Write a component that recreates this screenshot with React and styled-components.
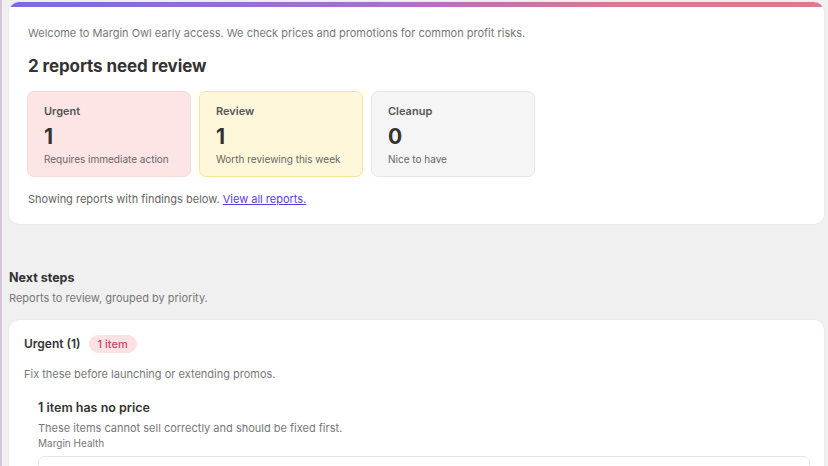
import styled, { createGlobalStyle } from "styled-components";

const GlobalStyle = createGlobalStyle`
  html, body {
    margin: 0;
    padding: 0;
    background: #f0f0f0;
  }
  body {
    font-family: Inter, "Noto Sans", "Liberation Sans", sans-serif;
    color: #333;
    -webkit-font-smoothing: antialiased;
  }
`;

const Page = styled.div`
  height: 466px;
  border-left: 2px solid #d6c4da;
  padding: 2px 4px 0 7px;
  box-sizing: border-box;
  overflow: hidden;
`;

const Card = styled.section`
  background: #fff;
  border-radius: 10px;
  box-shadow: 0 0 0 1px #ebebeb;
  overflow: hidden;
`;

const GradientBar = styled.div`
  height: 5px;
  background: linear-gradient(90deg, #7a6ae4 0%, #a770c8 45%, #d97a90 75%, #db7b8c 100%);
`;

const SummaryBody = styled.div`
  padding: 18px 19px 17px;
`;

const Intro = styled.p`
  margin: 0;
  font-size: 11px;
  line-height: 16px;
  color: #777;
`;

const Heading = styled.h1`
  margin: 13px 0 0;
  font-size: 17px;
  line-height: 24px;
  font-weight: 700;
  color: #333;
  letter-spacing: -0.1px;
`;

const StatRow = styled.div`
  display: flex;
  gap: 8px;
  margin-top: 13px;
  margin-left: -1px;
`;

const tones = {
  urgent: { bg: "#fee5e5", border: "#f8dada" },
  review: { bg: "#fef7d9", border: "#f8e59c" },
  cleanup: { bg: "#f5f5f5", border: "#e6e6e6" },
};

const StatCard = styled.div`
  width: 164px;
  box-sizing: border-box;
  height: 86px;
  padding: 12px 16px 0;
  border-radius: 7px;
  background: ${(p) => tones[p.$tone].bg};
  border: 1px solid ${(p) => tones[p.$tone].border};
  display: flex;
  flex-direction: column;
`;

const StatLabel = styled.span`
  font-size: 11px;
  line-height: 14px;
  font-weight: 600;
  color: #555;
`;

const StatValue = styled.span`
  margin-top: 6px;
  font-size: 21px;
  line-height: 26px;
  font-weight: 700;
  color: #333;
`;

const StatNote = styled.span`
  margin-top: 2px;
  font-size: 10px;
  line-height: 14px;
  color: #666;
  white-space: nowrap;
`;

const Footnote = styled.p`
  margin: 14px 0 0;
  font-size: 11px;
  line-height: 16px;
  color: #666;
`;

const TextLink = styled.a`
  color: #5a3de0;
  text-decoration: underline;
  cursor: pointer;
`;

const Section = styled.div`
  margin-top: 46px;
`;

const SectionTitle = styled.h2`
  margin: 0;
  font-size: 12.5px;
  line-height: 16px;
  font-weight: 700;
  color: #333;
`;

const SectionSub = styled.p`
  margin: 4px 0 0;
  font-size: 11px;
  line-height: 16px;
  color: #777;
`;

const GroupCard = styled(Card)`
  margin-top: 14px;
  padding: 15px 15px 40px;
`;

const GroupHeader = styled.div`
  display: flex;
  align-items: center;
  gap: 8px;
`;

const GroupTitle = styled.h3`
  margin: 0;
  font-size: 12px;
  line-height: 18px;
  font-weight: 600;
  color: #333;
`;

const Badge = styled.span`
  display: inline-flex;
  align-items: center;
  height: 18px;
  padding: 0 9px;
  border-radius: 9px;
  background: #fde2e4;
  color: #c4476a;
  font-size: 11px;
  font-weight: 500;
`;

const GroupNote = styled.p`
  margin: 13px 0 0;
  font-size: 11px;
  line-height: 16px;
  color: #777;
`;

const Finding = styled.div`
  margin-top: 18px;
  padding-left: 14px;
`;

const FindingTitle = styled.h4`
  margin: 0;
  font-size: 12.5px;
  line-height: 16px;
  font-weight: 600;
  color: #333;
`;

const FindingText = styled.p`
  margin: 4px 0 0;
  font-size: 11px;
  line-height: 16px;
  color: #777;
`;

const FindingMeta = styled.span`
  display: block;
  font-size: 10px;
  line-height: 14px;
  color: #777;
`;

const ItemBox = styled.div`
  margin-top: 6px;
  margin-right: -1px;
  height: 60px;
  border: 1px solid #e4e4e4;
  border-radius: 7px;
`;

const stats = [
  { tone: "urgent", label: "Urgent", value: 1, note: "Requires immediate action" },
  { tone: "review", label: "Review", value: 1, note: "Worth reviewing this week" },
  { tone: "cleanup", label: "Cleanup", value: 0, note: "Nice to have" },
];

export default function App() {
  return (
    <>
      <GlobalStyle />
      <Page>
        <Card>
          <GradientBar />
          <SummaryBody>
            <Intro>
              Welcome to Margin Owl early access. We check prices and promotions for common profit risks.
            </Intro>
            <Heading>2 reports need review</Heading>
            <StatRow>
              {stats.map((s) => (
                <StatCard key={s.tone} $tone={s.tone}>
                  <StatLabel>{s.label}</StatLabel>
                  <StatValue>{s.value}</StatValue>
                  <StatNote>{s.note}</StatNote>
                </StatCard>
              ))}
            </StatRow>
            <Footnote>
              Showing reports with findings below. <TextLink>View all reports.</TextLink>
            </Footnote>
          </SummaryBody>
        </Card>

        <Section>
          <SectionTitle>Next steps</SectionTitle>
          <SectionSub>Reports to review, grouped by priority.</SectionSub>
        </Section>

        <GroupCard>
          <GroupHeader>
            <GroupTitle>Urgent (1)</GroupTitle>
            <Badge>1 item</Badge>
          </GroupHeader>
          <GroupNote>Fix these before launching or extending promos.</GroupNote>
          <Finding>
            <FindingTitle>1 item has no price</FindingTitle>
            <FindingText>These items cannot sell correctly and should be fixed first.</FindingText>
            <FindingMeta>Margin Health</FindingMeta>
            <ItemBox />
          </Finding>
        </GroupCard>
      </Page>
    </>
  );
}
